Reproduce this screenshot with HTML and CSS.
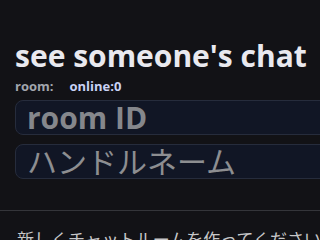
FILE: index.html
```html
<!DOCTYPE html>
<html>
<head>
<meta charset="utf-8">
<link rel="stylesheet" href="styles.css">
</head>
<body>
<main class="page">
  <h1 class="title">see someone's chat</h1>
  <div class="status">
    <span class="label">room:</span>
    <span class="online">online:0</span>
  </div>
  <div class="field"><input class="input" placeholder="room ID"></div>
  <div class="field"><input class="input jp" placeholder="ハンドルネーム"></div>
</main>
<hr class="rule">
<p class="note">新しくチャットルームを作ってください</p>
</body>
</html>
```
FILE: styles.css
```css
html, body {
  margin: 0;
  padding: 0;
  background: #121216;
  overflow: hidden;
}
body {
  width: 320px;
  height: 240px;
  font-family: "Open Sans", "Noto Sans CJK JP", sans-serif;
}
.page {
  padding: 38px 0 0 15px;
  display: flex;
  flex-direction: column;
}
.title {
  margin: 0;
  font-size: 30px;
  font-weight: 700;
  line-height: 36px;
  color: #e9e9ef;
  white-space: nowrap;
}
.status {
  display: flex;
  gap: 16px;
  margin-top: 3px;
  font-size: 13px;
  font-weight: 700;
  line-height: 18px;
}
.label { color: #a2a6ad; }
.online { color: #c9d2f5; }
.field {
  margin-top: 5px;
  width: 330px;
}
.field + .field { margin-top: 9px; }
.input {
  box-sizing: border-box;
  width: 100%;
  height: 35px;
  margin: 0;
  padding: 0 0 0 11px;
  border: 1px solid #262c3c;
  border-radius: 8px;
  background: #111625;
  font-family: "Open Sans", "Noto Sans CJK JP", sans-serif;
  font-size: 30px;
  font-weight: 700;
  color: #ddd;
  outline: none;
}
.input::placeholder { color: #85878c; opacity: 1; }
.input.jp { font-weight: 400; }
.input.jp::placeholder { color: #8d8e91; }
.rule {
  margin: 31px 0 0 0;
  border: 0;
  border-top: 1px solid #34353a;
}
.note {
  margin: 16px 0 0 17px;
  font-size: 17px;
  line-height: 24px;
  color: #c7c7c9;
  white-space: nowrap;
  font-family: "Noto Sans CJK JP", sans-serif;
}
```
